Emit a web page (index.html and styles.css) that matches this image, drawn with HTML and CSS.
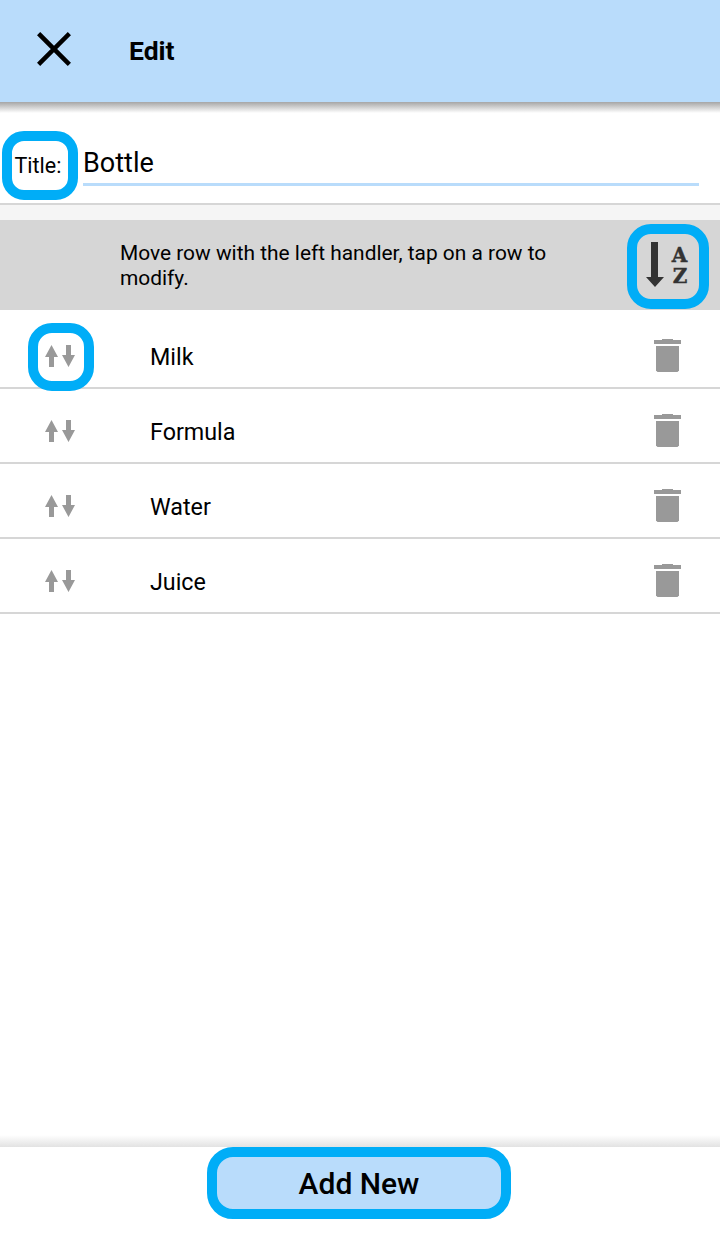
FILE: index.html
```html
<!DOCTYPE html>
<html lang="en">
<head>
    <meta charset="UTF-8">
    <meta name="viewport" content="width=device-width, initial-scale=1.0">
    <title>Edit</title>
    <link rel="stylesheet" href="styles.css">
</head>
<body>
    <div class="page">
        <header class="app-bar">
            <svg class="close-icon" width="36" height="36" viewBox="0 0 36 36">
                <path d="M4.2 4.2 L31.8 31.8 M31.8 4.2 L4.2 31.8" stroke="#000" stroke-width="4.5" stroke-linecap="square" fill="none"/>
            </svg>
            <h1 class="app-title">Edit</h1>
        </header>

        <div class="title-row">
            <label class="title-label">Title:</label>
            <div class="title-input">Bottle</div>
        </div>

        <div class="hint-bar">
            <p class="hint-text">Move row with the left handler, tap on a row to modify.</p>
            <div class="sort-button">
                <svg width="62" height="65" viewBox="0 0 62 65">
                    <path d="M14 8 H21 V43 H27 L18 53 L9 43 H14 Z" fill="#333"/>
                    <text x="42.5" y="28" class="sort-letter" text-anchor="middle">A</text>
                    <text x="43" y="49" class="sort-letter" text-anchor="middle">Z</text>
                </svg>
            </div>
        </div>

        <ul class="item-list">
            <li class="item item-first">
                <div class="handle handle-ring">
                    <svg width="30" height="22" viewBox="0 0 30 22"><use href="#arrows"/></svg>
                </div>
                <span class="item-name">Milk</span>
                <svg class="trash" width="27" height="33" viewBox="0 0 27 33"><use href="#trash"/></svg>
            </li>
            <li class="item">
                <div class="handle">
                    <svg width="30" height="22" viewBox="0 0 30 22"><use href="#arrows"/></svg>
                </div>
                <span class="item-name">Formula</span>
                <svg class="trash" width="27" height="33" viewBox="0 0 27 33"><use href="#trash"/></svg>
            </li>
            <li class="item">
                <div class="handle">
                    <svg width="30" height="22" viewBox="0 0 30 22"><use href="#arrows"/></svg>
                </div>
                <span class="item-name">Water</span>
                <svg class="trash" width="27" height="33" viewBox="0 0 27 33"><use href="#trash"/></svg>
            </li>
            <li class="item">
                <div class="handle">
                    <svg width="30" height="22" viewBox="0 0 30 22"><use href="#arrows"/></svg>
                </div>
                <span class="item-name">Juice</span>
                <svg class="trash" width="27" height="33" viewBox="0 0 27 33"><use href="#trash"/></svg>
            </li>
        </ul>

        <footer class="footer">
            <button class="add-button" type="button">Add New</button>
        </footer>
    </div>

    <svg width="0" height="0" class="defs">
        <defs>
            <g id="arrows" fill="#999">
                <path d="M6.5 0 L13 12 H9 V22 H4 V12 H0 Z"/>
                <path d="M21 0 H26 V10 H30 L23.5 22 L17 10 H21 Z"/>
            </g>
            <g id="trash" fill="#999">
                <path d="M8 0 H19 V1 H27 V5 H0 V1 H8 Z"/>
                <path d="M2 7 H25 V31.5 L23.5 33 H3.5 L2 31.5 Z"/>
            </g>
        </defs>
    </svg>
</body>
</html>
```

FILE: styles.css
```css
* {
    box-sizing: border-box;
}
body {
    margin: 0;
    font-family: Roboto, "Liberation Sans", sans-serif;
    color: #000;
    background: #fff;
}
.page {
    display: flex;
    flex-direction: column;
    height: 1241px;
    overflow: hidden;
}
.defs {
    position: absolute;
}

/* top bar */
.app-bar {
    display: flex;
    align-items: center;
    flex: none;
    height: 102px;
    padding-left: 36px;
    background: #b9dcfb;
    position: relative;
}
.app-bar::after {
    content: "";
    position: absolute;
    left: 0;
    right: 0;
    top: 100%;
    height: 11px;
    background: linear-gradient(#a6a6a6, #fff);
}
.close-icon {
    margin: 0 57px 4px 0;
}
.app-title {
    margin: 0 0 2px;
    font-size: 26.5px;
    font-weight: 700;
}

/* title field */
.title-row {
    display: flex;
    flex: none;
    align-items: flex-start;
    height: 103px;
    padding: 29px 21px 0 2px;
    border-bottom: 2px solid #d6d6d6;
}
.title-label {
    display: flex;
    align-items: center;
    justify-content: center;
    width: 76px;
    height: 69px;
    margin-right: 5px;
    padding-right: 4px;
    border: 10px solid #00adf7;
    border-radius: 22px;
    font-size: 21.5px;
}
.title-input {
    flex: 1;
    height: 55px;
    padding-top: 16px;
    border-bottom: 3px solid #b9dcfb;
    font-size: 27px;
}

/* hint bar */
.hint-bar {
    display: flex;
    flex: none;
    justify-content: space-between;
    align-items: flex-start;
    height: 105px;
    padding: 21px 11px 0 120px;
    border-top: 15px solid #f5f5f5;
    background: #d6d6d6;
}
.hint-text {
    width: 480px;
    margin: 0;
    font-size: 20.9px;
    line-height: 25px;
}
.sort-button {
    display: flex;
    align-items: center;
    justify-content: center;
    flex: none;
    width: 82px;
    height: 85px;
    margin-top: -17px;
    border: 10px solid #00adf7;
    border-radius: 24px;
}
.sort-letter {
    font-family: "DejaVu Serif", serif;
    font-size: 20px;
    font-weight: 700;
    fill: #333;
    stroke: #333;
    stroke-width: 0.4px;
}

/* rows */
.item-list {
    flex: 1;
    margin: 0;
    padding: 0;
    list-style: none;
}
.item {
    display: flex;
    align-items: center;
    height: 75px;
    padding-top: 10px;
    border-bottom: 2px solid #d6d6d6;
}
.item-first {
    height: 79px;
    padding-top: 14px;
}
.handle {
    display: flex;
    align-items: center;
    justify-content: center;
    flex: none;
    width: 66px;
    height: 68px;
    margin: 0 56px 0 28px;
}
.handle svg {
    margin-right: 2px;
}
.handle-ring {
    border: 10px solid #00adf7;
    border-radius: 24px;
    margin-bottom: -2px;
    position: relative;
}
.handle-ring svg {
    margin-bottom: 2px;
}
.item-name {
    flex: 1;
    margin-top: 2px;
    font-size: 23.3px;
}
.trash {
    flex: none;
    margin-right: 39px;
}

/* bottom */
.footer {
    display: flex;
    justify-content: center;
    flex: none;
    height: 94px;
    background: #fff;
    position: relative;
}
.footer::before {
    content: "";
    position: absolute;
    left: 0;
    right: 0;
    bottom: 100%;
    height: 12px;
    background: linear-gradient(#fff, #e2e2e2);
}
.add-button {
    width: 304px;
    height: 72px;
    margin-left: -2px;
    padding: 0 6px;
    border: 10px solid #00adf7;
    border-radius: 26px;
    background: #b9dcfb;
    color: #000;
    font-family: Roboto, "Liberation Sans", sans-serif;
    font-size: 30px;
    font-weight: 500;
}
```
